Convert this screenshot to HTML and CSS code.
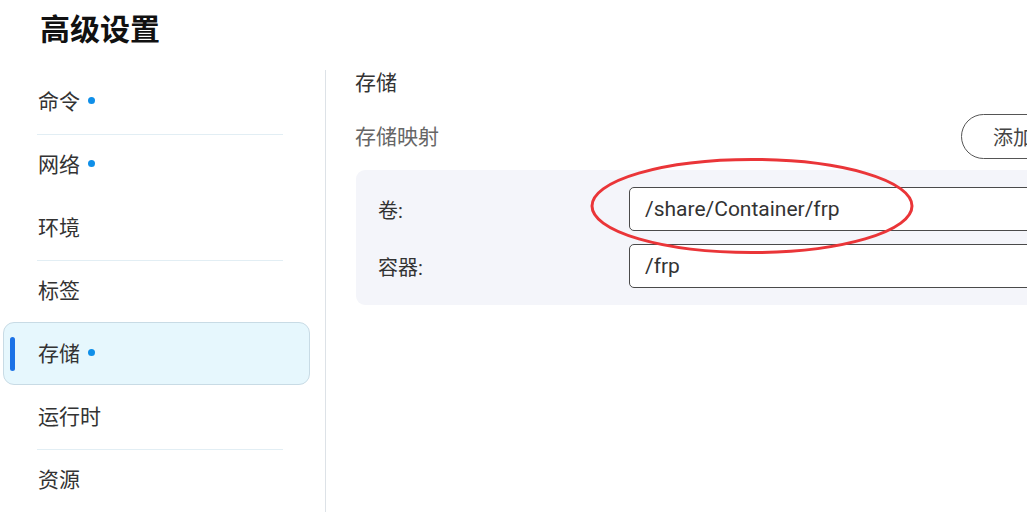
FILE: index.html
```html
<!DOCTYPE html>
<html lang="zh-CN">
<head>
<meta charset="utf-8">
<title>高级设置</title>
<link rel="stylesheet" href="styles.css">
</head>
<body>
<div class="page">
  <header class="header"><h1 class="title">高级设置</h1></header>
  <div class="main">
    <nav class="sidebar">
      <div class="nav-item sep">命令<span class="dot"></span></div>
      <div class="nav-item">网络<span class="dot"></span></div>
      <div class="nav-item sep">环境</div>
      <div class="nav-item">标签</div>
      <div class="nav-item active">存储<span class="dot"></span></div>
      <div class="nav-item sep">运行时</div>
      <div class="nav-item">资源</div>
    </nav>
    <section class="content">
      <div class="section-title">存储</div>
      <div class="map-row">
        <div class="map-label">存储映射</div>
        <button class="btn">添加</button>
      </div>
      <div class="panel">
        <div class="field">
          <div class="field-label">卷:</div>
          <div class="input">/share/Container/frp</div>
        </div>
        <div class="field">
          <div class="field-label">容器:</div>
          <div class="input">/frp</div>
        </div>
      </div>
    </section>
  </div>
  <svg class="annot" width="340" height="110" viewBox="0 0 340 110">
    <ellipse cx="170" cy="55" rx="160" ry="46.5" fill="none" stroke="#ea3538" stroke-width="3"/>
  </svg>
</div>
</body>
</html>
```

FILE: styles.css
```css
* { box-sizing: border-box; }
html, body { margin: 0; padding: 0; background: #fff; overflow: hidden; }
body {
  font-family: Roboto, "Noto Sans CJK SC", sans-serif;
  color: #333;
  width: 1027px;
  height: 512px;
}
.page { position: relative; width: 1120px; height: 512px; }
.header { height: 70px; padding-left: 40px; }
.title {
  margin: 0;
  font-family: "Noto Sans CJK SC", sans-serif;
  font-size: 30px;
  font-weight: 700;
  line-height: 54px;
  color: #111;
}
.main { display: flex; height: 442px; }
.sidebar {
  width: 326px;
  flex: none;
  border-right: 1px solid #dde2e7;
  display: flex;
  flex-direction: column;
}
.nav-item {
  position: relative;
  height: 63px;
  margin-left: 3px;
  width: 307px;
  padding-left: 34px;
  padding-bottom: 4px;
  display: flex;
  align-items: center;
  font-family: "Noto Sans CJK SC", sans-serif;
  font-size: 21px;
  color: #333;
  border: 1px solid transparent;
  border-radius: 11px;
}
.nav-item.sep::after {
  content: "";
  position: absolute;
  left: 33px;
  right: 26px;
  bottom: -3px;
  height: 1px;
  background: #e2eef4;
}
.nav-item.active {
  background: #e6f7fd;
  border-color: #c8dbe5;
}
.nav-item.active::before {
  content: "";
  position: absolute;
  left: 6px;
  top: 14px;
  width: 5px;
  height: 34px;
  border-radius: 3px;
  background: #1c72e6;
}
.dot {
  width: 7px;
  height: 7px;
  border-radius: 50%;
  background: #0f8fe9;
  margin-left: 8px;
  margin-top: 1px;
}
.content { flex: 1; padding-left: 29px; padding-right: 33px; }
.section-title {
  font-family: "Noto Sans CJK SC", sans-serif;
  font-size: 21px;
  line-height: 22px;
  color: #333;
}
.map-row {
  margin-top: 22px;
  height: 45px;
  display: flex;
  align-items: center;
  justify-content: space-between;
}
.map-label {
  font-family: "Noto Sans CJK SC", sans-serif;
  font-size: 21px;
  color: #666;
  padding-bottom: 4px;
}
.btn {
  height: 45px;
  width: 126px;
  padding: 0 0 0 31px;
  text-align: left;
  border: 1px solid #555;
  border-radius: 23px;
  background: #fff;
  font-family: "Noto Sans CJK SC", sans-serif;
  font-size: 20px;
  color: #444;
}
.panel {
  margin-top: 11px;
  margin-left: 1px;
  background: #f4f5fa;
  border-radius: 9px;
  padding: 17px 0 17px 22px;
  display: flex;
  flex-direction: column;
  gap: 13px;
}
.field { display: flex; align-items: center; }
.field-label {
  width: 251px;
  flex: none;
  font-family: Roboto, "Noto Sans CJK SC", sans-serif;
  font-size: 20px;
  color: #333;
}
.input {
  flex: 1;
  height: 44px;
  border: 1px solid #4a4a4a;
  border-radius: 5px;
  background: #fff;
  padding-left: 15px;
  display: flex;
  align-items: center;
  font-family: Roboto, sans-serif;
  font-size: 21px;
  color: #333;
}
.annot { position: absolute; left: 582px; top: 151px; pointer-events: none; }
```
